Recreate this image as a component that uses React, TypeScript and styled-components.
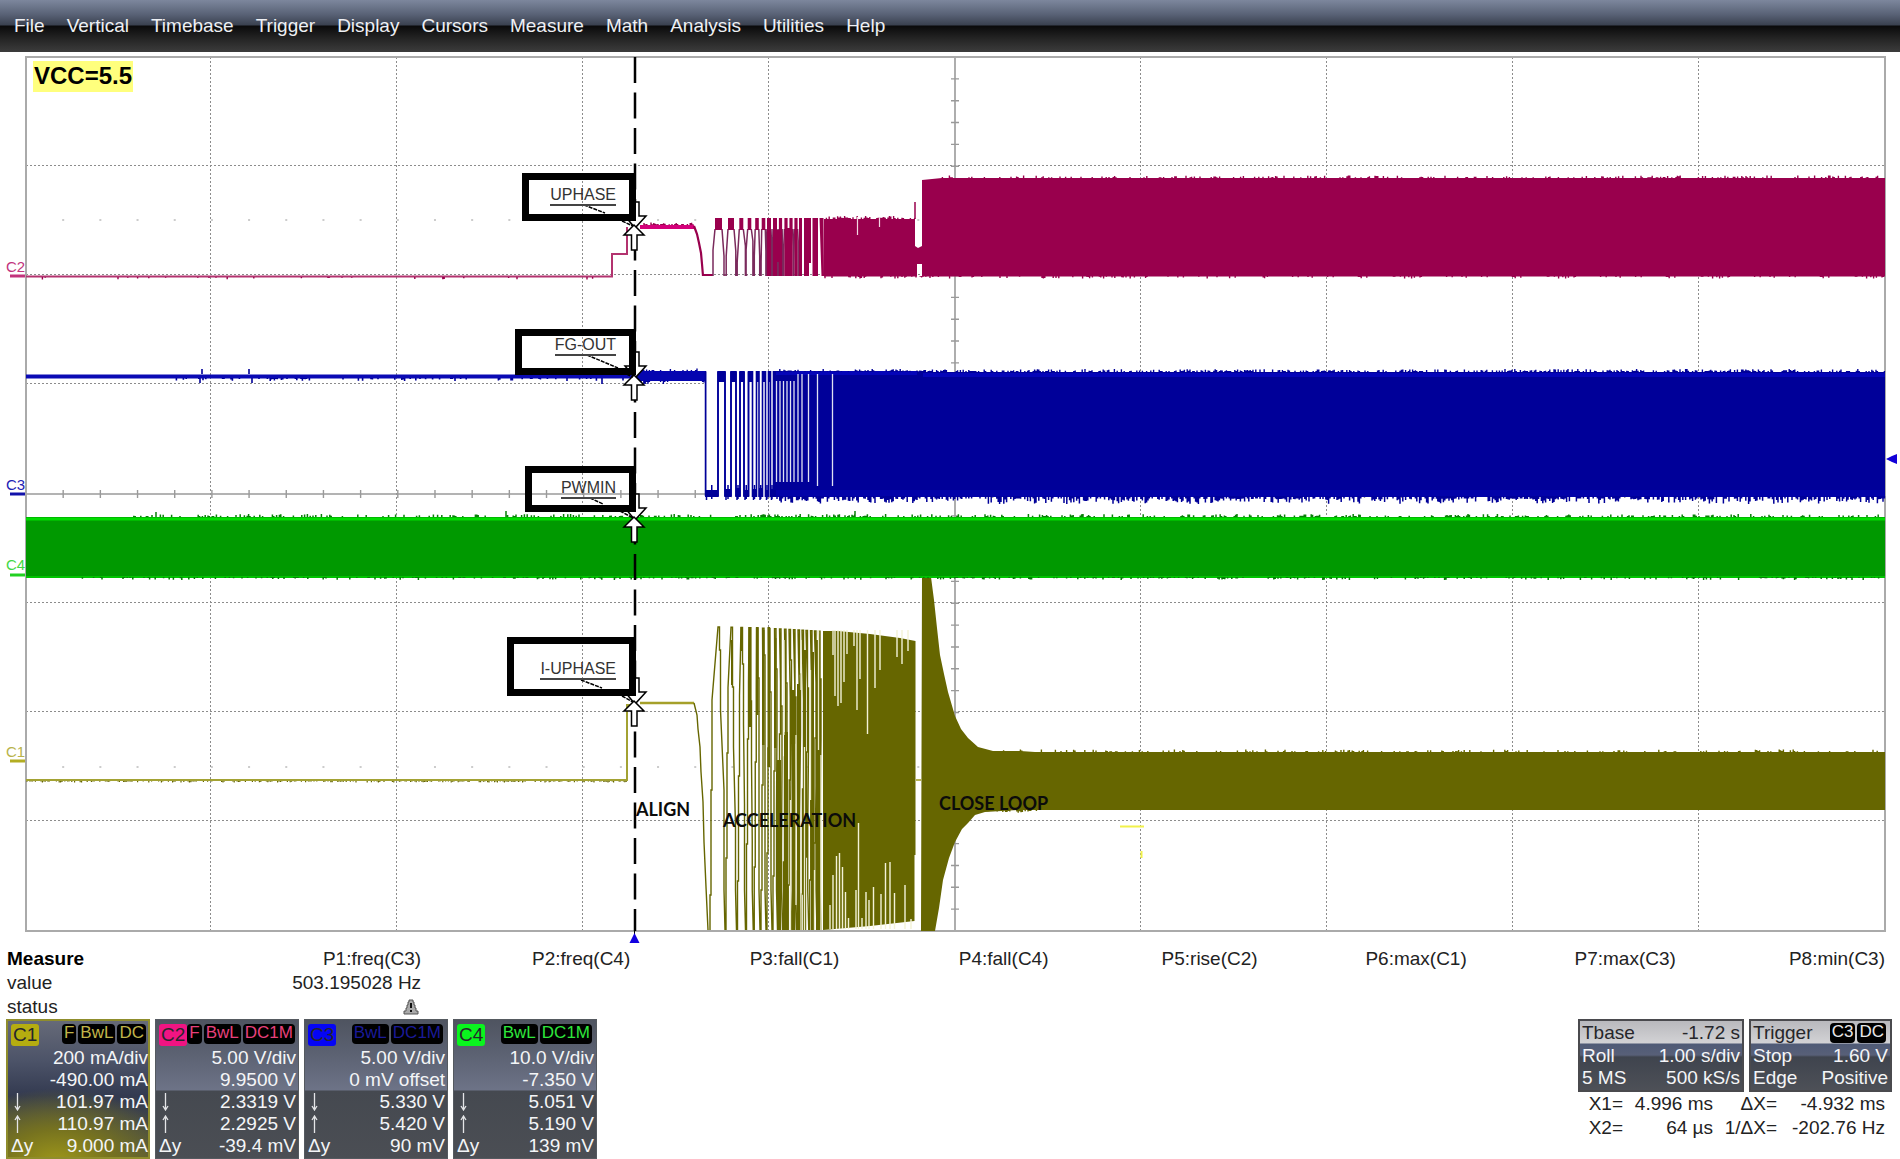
import React from "react";
import styled, { createGlobalStyle, css } from "styled-components";

const GlobalStyle = createGlobalStyle`
  *, *::before, *::after { box-sizing: border-box; }
  body {
    margin: 0;
    background: #fff;
    color: #222;
    font-family: "Liberation Sans", Arial, sans-serif;
    font-size: 19px;
    line-height: 22px;
  }
`;

const Screen = styled.main`
  display: flex;
  flex-direction: column;
  width: 100%;
`;

/* ---------- menu ---------- */

const MenuBar = styled.nav`
  display: flex;
  align-items: center;
  gap: 22px;
  height: 52px;
  padding: 0 14px;
  background: linear-gradient(#7d879d 0, #5a6377 14px, #3a4150 25px, #0a0a0b 26px, #232323 38px, #3c3c3c 52px);
`;

const MenuItem = styled.button`
  padding: 0;
  border: 0;
  background: none;
  color: #eef0f4;
  font: inherit;
  cursor: pointer;
`;

/* ---------- waveform area ---------- */

const VIEW = { w: 1900, top: 52, h: 893 };
const px = (n: number) => `${(n / VIEW.w) * 100}%`;
const py = (n: number) => `${((n - VIEW.top) / VIEW.h) * 100}%`;

const Canvas = styled.section`
  position: relative;
  width: 100%;
`;

const Plot = styled.svg`
  display: block;
  width: 100%;
  height: auto;
`;

const Pinned = styled.span<{ $x: number; $y: number }>`
  position: absolute;
  left: ${(p) => px(p.$x)};
  top: ${(p) => py(p.$y)};
  white-space: nowrap;
`;

const Title = styled(Pinned)`
  padding: 0 1px 2px;
  background: #ffff7d;
  color: #000;
  font-size: 24px;
  font-weight: bold;
  line-height: 29px;
`;

const ChannelTag = styled(Pinned)<{ $color: string }>`
  color: ${(p) => p.$color};
  font-size: 15px;
  line-height: 16px;
`;

const Phase = styled(Pinned)`
  color: #0b0b0b;
  font-family: Lato, "Open Sans", sans-serif;
  font-size: 18px;
  font-weight: bold;
  line-height: 22px;
`;

const Callout = styled(Pinned)<{ $w: number; $h: number; $pad: number }>`
  display: flex;
  justify-content: flex-end;
  align-items: flex-start;
  width: ${(p) => px(p.$w)};
  height: ${(p) => (p.$h / VIEW.h) * 100}%;
  padding: ${(p) => p.$pad}px 13px 0 0;
  border: 7px solid #000;
`;

const CalloutText = styled.span`
  border-bottom: 2px solid #444;
  color: #333;
  font-size: 16px;
  line-height: 18px;
`;

const GRID = { l: 26, r: 1885, t: 57, b: 931 };
const COL = (GRID.r - GRID.l) / 10;
const ROW = (GRID.b - GRID.t) / 8;
const MID_X = 955;
const MID_Y = 494;

/* repeatable noise for the ragged trace edges */
const noise = (seed: number) => {
  let s = seed;
  return () => {
    s = (s * 1103515245 + 12345) & 0x7fffffff;
    return s / 0x7fffffff;
  };
};

const fringe = (x1: number, x2: number, y: number, max: number, density: number, seed: number) => {
  const rnd = noise(seed);
  let d = "";
  for (let x = x1 + 1; x < x2; x += 1.4) {
    const a = rnd();
    const b = rnd();
    if (a < density) d += `M${x.toFixed(1)} ${y}v${(max * (0.3 + 0.7 * b * b)).toFixed(1)}`;
  }
  return d;
};

const Graticule = () => {
  const dotted = { stroke: "#8c8c8c", strokeWidth: 1, strokeDasharray: "2 2", shapeRendering: "crispEdges" as const };
  let ticks = "";
  let dots = "";
  for (let i = 1; i < 50; i++) {
    const x = GRID.l + (i * COL) / 5;
    ticks += `M${x} ${MID_Y - 4}v8`;
    dots += `M${x} 219v2M${x} 766v2`;
  }
  for (let i = 1; i < 40; i++) ticks += `M${MID_X - 4} ${GRID.t + (i * ROW) / 5}h8`;
  return (
    <g fill="none">
      {[1, 2, 3, 4, 6, 7, 8, 9].map((i) => (
        <path key={`c${i}`} d={`M${Math.floor(GRID.l + i * COL) - 1}.5 ${GRID.t}V${GRID.b}`} {...dotted} />
      ))}
      {[1, 2, 3, 5, 6, 7].map((i) => (
        <path key={`r${i}`} d={`M${GRID.l} ${Math.floor(GRID.t + i * ROW) - 1}.5H${GRID.r}`} {...dotted} />
      ))}
      <path d={ticks} stroke="#999" strokeWidth="1.4" />
      <path d={dots} stroke="#ccc" strokeWidth="2" />
      <path d={`M${GRID.l} ${MID_Y}H${GRID.r}M${MID_X} ${GRID.t}V${GRID.b}`} stroke="#9a9a9a" strokeWidth="1.6" />
      <path d={`M${GRID.l} ${GRID.t}H${GRID.r}V${GRID.b}H${GRID.l}z`} stroke="#aaa" strokeWidth="2" />
    </g>
  );
};

const TraceC2 = () => {
  const c = "#99004d";
  const peaks: [number, number][] = [
    [718.5, 3.5], [731, 3], [741.3, 2], [749.5, 1.8], [757, 1.8], [763.5, 1.8], [769, 2], [775, 2],
    [780.5, 1.6], [786, 1.6], [791, 1.6], [796, 1.6],
  ];
  let caps = "";
  let edges = "";
  peaks.forEach(([x, w], i) => {
    const foot = Math.max(w + 0.6, 5.5 - i * 0.7);
    const cap = i > 5 ? 58 : 12;
    caps += `M${x - w} 218h${2 * w}v${cap}h${-2 * w}z`;
    edges += `M${x - foot} 276V${250 + (i % 3) * 6}L${x - w} 229M${x + foot} 276V${256 - (i % 4) * 5}L${x + w} 229`;
    if (i < 6) edges += `M${x + foot} 275h2`;
  });
  return (
    <g fill="none" stroke={c}>
      <path d="M26 276.5H612V254H627V227" stroke="#b3336f" strokeWidth="2" />
      <path d={fringe(26, 612, 277, 2.5, 0.06, 5)} strokeWidth="1.4" />
      <path d="M640 227H694" stroke="#d4007a" strokeWidth="4" />
      <path d={fringe(643, 694, 225, -2.5, 0.6, 8)} strokeWidth="1.4" />
      <path d="M694 226l3 8 2 9 2 10 1 11 1 12M703 275H713" strokeWidth="2.2" />
      <path d={edges} stroke="#7a2a5c" strokeWidth="1.5" />
      <path d={caps} fill={c} stroke="none" />
      <path d="M776 230h6v32h-6zM786 228h5v48h-5zM799 218h3v58h-3zM804 218h7v45h-2v13h-5zM812.5 218h5.5v58h-5.5zM819.5 218h4l.5 58h-2.5z" fill={c} stroke="none" />
      <path d="M824 219H915V246l3 2 4-2V180l20-2H1885V276.5H922V264h-5V276.5H824z" fill={c} stroke="none" />
      <path d="M915 219V202" strokeWidth="1.5" />
      <path d={fringe(824, 915, 219, -3, 0.6, 21)} strokeWidth="1.4" />
      <path d={fringe(940, 1885, 178, -2.5, 0.25, 31)} strokeWidth="1.4" />
      <path d={fringe(824, 1885, 276, 2.5, 0.25, 37)} strokeWidth="1.4" />
      <path d="M857.5 217v18M879.5 217v10" stroke="#f3d5e2" strokeWidth="1.2" />
    </g>
  );
};

const TraceC3 = () => {
  const c = "#000099";
  const lows: [number, number][] = [
    [705.5, 718], [725, 731], [736, 740], [744, 748.5], [752.5, 756.5], [759, 762.5], [765.5, 768.5], [770.5, 773.5],
  ];
  const slits = [776.5, 780, 783.5, 787, 790.5, 794, 798, 802, 808.5, 817.5, 832.5];
  return (
    <g fill="none" stroke={c}>
      <path d="M26 376.5H636" stroke="#0a0ab4" strokeWidth="4" />
      <path d={fringe(160, 636, 378, 3, 0.2, 3) + "M202 374v-5M200 378v5M249 374v-5M252 378v5M602 378v6"} strokeWidth="1.6" />
      <path d="M636 371H706V381H636z" fill="#0505b0" stroke="none" />
      <path d={fringe(640, 706, 371, -3, 0.4, 41) + fringe(640, 706, 381, 3, 0.3, 43)} strokeWidth="1.4" />
      <path d="M705 371H917l6 1H1885V497H705z" fill={c} stroke="none" />
      <path d="M776 371H917v4H776zM923 373H1885v4H923z" fill="#0505b8" stroke="none" />
      <path d="M776 490H1885v7H776z" fill="#0303b4" stroke="none" opacity=".6" />
      {lows.map(([a, b], i) => (
        <g key={a} stroke="none">
          <path d={`M${a + 0.8} 368H${b - 0.8}V${490 - (i % 3)}H${a + 0.8}z`} fill="#fff" />
          {i < 7 && <path d={`M${b + 0.8} 382H${lows[i + 1][0] - 0.8}V500H${b + 0.8}z`} fill="#fff" />}
        </g>
      ))}
      <path d={lows.slice(0, 4).map(([a, b]) => `M${a} 372V496M${b} 372V496`).join("")} strokeWidth="1.5" />
      <path d={slits.map((x, i) => `M${x} ${i > 5 ? 374 : 381}V${i > 8 ? 486 : 482}`).join("")} stroke="#dfe1f2" strokeWidth="1.3" />
      <path d={lows.map(([a, b]) => `M${a + 1} 490V500M${(a + b) / 2} 485V499`).join("")} strokeWidth="1.5" />
      <path d={fringe(776, 1885, 372, -3, 0.5, 51)} strokeWidth="1.4" />
      <path d={fringe(776, 1885, 496, 8, 0.62, 57)} strokeWidth="1.5" />
    </g>
  );
};

const TraceC4 = () => (
  <g fill="none" stroke="#087f08">
    <path d="M26 517H1885V577H26z" fill="#009900" stroke="none" />
    <path d="M26 519H1885" stroke="#00dc00" strokeWidth="3" />
    <path d="M26 577H1885" stroke="#00c400" strokeWidth="2" />
    <path d={fringe(130, 1885, 517, -3, 0.3, 61) + "M156 517v-5M506 517v-6M855 517v-6"} strokeWidth="1.5" />
    <path d={fringe(80, 1885, 577, 3, 0.3, 67)} strokeWidth="1.5" />
  </g>
);

const TraceC1 = () => {
  const c = "#666600";
  const peaks = [718.5, 731.5, 741.5, 749.5, 757, 763, 769, 775, 780, 785, 789.5, 794, 798.5, 802.5, 806.5, 811, 815, 819];
  let d = "M694 703l3 12 1 14 2 18 1 25 2 30 1 40 2 45 2 43";
  peaks.forEach((x, i) => {
    const prev = i ? (peaks[i - 1] + x) / 2 + 1 : 710;
    const next = i < peaks.length - 1 ? (x + peaks[i + 1]) / 2 : x + 2;
    const top = 627 + i * 0.25;
    const j = (i * 37) % 60;
    d += `M${prev} 930V${895 - j}h1V${790 - j}h1V${700 - j / 3}L${x - 0.5} ${top}h1.5V${650 + j}h1V${710 + j}L${next - 1} ${790 + j}V890L${next} 930`;
  });
  const topSlits = [[833, 655], [835, 696], [838, 706], [841, 703], [844, 682], [847, 654], [854, 646], [857, 710], [860, 679], [867.5, 734], [875, 688], [880, 670], [897, 657], [902, 664], [908, 651]];
  const bottomSlits = [[830, 905], [833, 875], [836.5, 856], [839.5, 853], [842.5, 867], [845.5, 892], [848.5, 918], [856, 890], [858.5, 823], [862, 918], [866, 892], [869, 900], [873.5, 887], [881, 894], [885.5, 863], [890, 862], [894.5, 893], [905, 885], [911, 919]];
  return (
    <g fill="none" stroke={c}>
      <path d="M26 780H627V705H632V720" stroke="#a3a233" strokeWidth="2" />
      <path d={fringe(26, 627, 781, 1.5, 0.5, 71)} strokeWidth="1.2" />
      <path d="M640 703H694" stroke="#a5a02a" strokeWidth="2.5" />
      <path d={d} strokeWidth="1.4" />
      <path d="M740.5 627h2v24h-2zM748.5 627h3v100h-3zM756 627h2.5v88h-2.5zM762 630h2.5v115h-2.5zM767.500 627h2.5v140h-2.5zM774 638h2.5v110h-2.5zM731 640h2v45h-2z" fill={c} stroke="none" />
      <path d="M784 732h4v198h-4zM792 690h3v240h-3zM797 684h3v246h-3zM803 650h3v280h-3zM811 652h3v278h-3zM816 640h4v290h-4zM777 760h4v170h-4z" fill={c} stroke="none" />
      <path d="M784 640V735M790.5 800V930M796 735V905M801 640V690M801 850V930M804.5 747V930M810.500 670V800M814.500 870V930M818.500 630V750M821 755V930" stroke="#ecebcb" strokeWidth="1.3" />
      <path d="M823 631H838L870 634 900 638 915.5 641V855h-1V921L870 926 823 930z" fill={c} stroke="none" />
      <path d={topSlits.map(([x, y]) => `M${x} 630V${y}`).join("") + bottomSlits.map(([x, y]) => `M${x} ${y}V929`).join("")} stroke="#f3f2d6" strokeWidth="1.4" />
      <path d="M916 780H921" stroke="#a5a02a" strokeWidth="1.6" />
      <path
        d="M922 577H931L934 600 937 628 940 655 944 674 948 692 955 716 961 729 968 738 978 747 993 751 1020 751 1035 752H1885V810H1020L985 812 975 815 968 823 962 829 955 842 949 858 943 880 939 908 935 931H921z"
        fill={c}
        stroke="none"
      />
      <path d={fringe(990, 1885, 752, -2.5, 0.22, 81) + fringe(985, 1040, 810, 3, 0.5, 83)} strokeWidth="1.4" />
    </g>
  );
};

const CursorMark = ({ y }: { y: number }) => (
  <g stroke="#000" strokeWidth="1.5">
    <path d={`M632 ${y - 24}H639V${y - 10}H646L635 ${y + 2} 625 ${y - 10}H632z`} fill="#fff" />
    <path d={`M634 ${y - 1}L644 ${y + 9}H637V${y + 24}H631.5V${y + 9}H624z`} fill="#fff" />
  </g>
);

const callouts = [
  { text: "UPHASE", x: 522, y: 173, w: 114, h: 48, pad: 6, mark: 226, leader: "M584 205L605 213M622 221L633 226" },
  { text: "FG-OUT", x: 515, y: 329, w: 121, h: 46, pad: 0, mark: 376, leader: "M587 355L618 368M622 372L633 377" },
  { text: "PWMIN", x: 525, y: 466, w: 111, h: 46, pad: 6, mark: 518, leader: "M590 498L603 504M620 511L633 518" },
  { text: "I-UPHASE", x: 507, y: 637, w: 129, h: 59, pad: 16, mark: 702, leader: "M581 680L602 688M622 696L633 702" },
];

const Waveforms = () => (
  <Canvas aria-label="Waveforms">
    <Plot viewBox={`0 ${VIEW.top} ${VIEW.w} ${VIEW.h}`} aria-hidden="true">
      <Graticule />
      <TraceC1 />
      <TraceC2 />
      <TraceC3 />
      <TraceC4 />
      <path d="M1120 826.5h24M1141.500 851v7" stroke="#f2f24a" strokeWidth="2" />
      <path d="M10 276H25" stroke="#c2337c" strokeWidth="3" />
      <path d="M10 494H25" stroke="#1111aa" strokeWidth="3" />
      <path d="M10 575H25" stroke="#22d022" strokeWidth="3" />
      <path d="M10 761H25" stroke="#b3ad22" strokeWidth="3" />
      <path d="M635 57V931" stroke="#000" strokeWidth="2.5" strokeDasharray="26 9.5" />
      <path d="M634.5 930V938" stroke="#000" />
      <path d="M634.5 933l5 10h-10z" fill="#1200e0" />
      <path d="M1886 459l6-3 5-2v10l-5-2z" fill="#1200d8" />
      {callouts.map((c) => (
        <g key={c.text}>
          <CursorMark y={c.mark} />
          <path d={c.leader} stroke="#000" strokeWidth="1.5" strokeDasharray="4 1" />
        </g>
      ))}
    </Plot>
    <Title $x={33} $y={61}>VCC=5.5</Title>
    <ChannelTag $x={6} $y={259} $color="#c2337c">C2</ChannelTag>
    <ChannelTag $x={6} $y={477} $color="#2222b4">C3</ChannelTag>
    <ChannelTag $x={6} $y={557} $color="#44d844">C4</ChannelTag>
    <ChannelTag $x={6} $y={744} $color="#b8b34a">C1</ChannelTag>
    {callouts.map((c) => (
      <Callout key={c.text} $x={c.x} $y={c.y} $w={c.w} $h={c.h} $pad={c.pad}>
        <CalloutText>{c.text}</CalloutText>
      </Callout>
    ))}
    <Phase $x={636} $y={798}>ALIGN</Phase>
    <Phase $x={723} $y={809}>ACCELERATION</Phase>
    <Phase $x={939} $y={792}>CLOSE LOOP</Phase>
  </Canvas>
);

/* ---------- measurements ---------- */

const MeasureWrap = styled.section`
  padding: 2px 15px 0 7px;
`;

const MeasureTable = styled.table`
  width: 100%;
  table-layout: fixed;
  border-collapse: collapse;
  line-height: 24px;

  th, td { height: 24px; padding: 0; font-weight: normal; text-align: right; white-space: nowrap; }
  th:first-child { width: 205px; text-align: left; }
  thead th:first-child { color: #000; font-weight: bold; }
`;

const WarningIcon = styled.svg`
  display: block;
  width: 16px;
  height: 16px;
  margin: 0 2px 0 auto;
`;

const params = ["P1:freq(C3)", "P2:freq(C4)", "P3:fall(C1)", "P4:fall(C4)", "P5:rise(C2)", "P6:max(C1)", "P7:max(C3)", "P8:min(C3)"];

const Measurements = () => (
  <MeasureWrap>
    <MeasureTable>
      <thead>
        <tr>
          <th scope="col">Measure</th>
          {params.map((p) => <th scope="col" key={p}>{p}</th>)}
        </tr>
      </thead>
      <tbody>
        <tr>
          <th scope="row">value</th>
          <td>503.195028 Hz</td>
          <td colSpan={7} />
        </tr>
        <tr>
          <th scope="row">status</th>
          <td>
            <WarningIcon viewBox="0 0 16 16" role="img" aria-label="warning">
              <path d="M6 1h4v2h1v3h1v3h1v3h2v3H1v-3h2V9h1V6h1V3h1z" fill="#aaa" stroke="#555" />
              <path d="M8 4v5M8 11v2" stroke="#111" strokeWidth="2" />
            </WarningIcon>
          </td>
          <td colSpan={7} />
        </tr>
      </tbody>
    </MeasureTable>
  </MeasureWrap>
);

/* ---------- descriptor boxes ---------- */

const Footer = styled.footer`
  display: flex;
  justify-content: space-between;
  align-items: flex-start;
  padding: 0 8px 0 6px;
`;

const Group = styled.div<{ $gap: number }>`
  display: flex;
  gap: ${(p) => p.$gap}px;
`;

const ChannelBox = styled.article<{ $active?: boolean }>`
  width: 144px;
  height: 140px;
  padding: 4px 2px 0 3px;
  border: 1px solid #555a60;
  color: #f4f5f7;
  background: linear-gradient(#4f5460 0, #5a6070 30px, #6d7387 70px, #454950 71px, #4b4e54 100%);
  ${(p) =>
    p.$active &&
    css`
      border: 2px solid #8f8d2c;
      padding: 3px 0 0 3px;
      background:
        radial-gradient(ellipse 120px 75px at 35% 105%, #a0991a 0, #77731f 45%, transparent 100%),
        linear-gradient(#666a78 0, #4c5368 40px, #333a50 75px, #55563f 100%);
    `}
`;

const BoxHead = styled.header`
  display: flex;
  justify-content: space-between;
  height: 23px;
`;

const Chip = styled.span<{ $color: string }>`
  height: 22px;
  padding: 0 2px;
  border-radius: 3px;
  background: ${(p) => p.$color};
  color: #26262c;
  line-height: 22px;
`;

const Badges = styled.span`
  display: flex;
  gap: 2px;
  padding-right: 2px;
`;

const Badge = styled.span<{ $color: string }>`
  height: 20px;
  padding: 0 2px;
  border-radius: 4px;
  background: #000;
  color: ${(p) => p.$color};
  font-size: 17px;
  line-height: 18px;
`;

const Line = styled.div`
  display: flex;
  justify-content: space-between;
  align-items: center;
  height: 22px;
  white-space: nowrap;
`;

const ArrowIcon = styled.svg`
  width: 9px;
  height: 18px;
  margin-left: 2px;
`;

const Arrow = ({ up }: { up?: boolean }) => (
  <ArrowIcon viewBox="0 0 9 18" aria-hidden="true">
    <path d={up ? "M4.5 18V1M2 5l2.5-4L7 5" : "M4.5 0V17M2 13l2.5 4L7 13"} stroke="#e4e5e7" strokeWidth="1.3" fill="none" />
  </ArrowIcon>
);

const channels = [
  { id: "C1", chip: "#b5ad10", ink: "#c0b54a", badges: ["F", "BwL", "DC"], rows: ["200 mA/div", "-490.00 mA", "101.97 mA", "110.97 mA", "9.000 mA"] },
  { id: "C2", chip: "#f01482", ink: "#e8407c", badges: ["F", "BwL", "DC1M"], rows: ["5.00 V/div", "9.9500 V", "2.3319 V", "2.2925 V", "-39.4 mV"] },
  { id: "C3", chip: "#0505f5", ink: "#1a1a98", badges: ["BwL", "DC1M"], rows: ["5.00 V/div", "0 mV offset", "5.330 V", "5.420 V", "90 mV"] },
  { id: "C4", chip: "#0af51e", ink: "#2ee63c", badges: ["BwL", "DC1M"], rows: ["10.0 V/div", "-7.350 V", "5.051 V", "5.190 V", "139 mV"] },
];

const leads = [<span />, <span />, <Arrow />, <Arrow up />, <span>Δy</span>];

const InfoBox = styled.article<{ $w: number }>`
  width: ${(p) => p.$w}px;
  height: 73px;
  padding: 0 2px;
  border: 2px solid #4a4a4e;
  color: #f4f5f7;
  background: linear-gradient(#b9b9bd 0, #d2d2d5 22px, #4f5a76 23px, #586078 34px, #3f444e 36px, #4d5057 100%);
`;

const InfoHead = styled(Line)`
  height: 24px;
  color: #26262a;
`;

const Side = styled.aside`
  display: flex;
  flex-direction: column;
`;

const Readout = styled.dl`
  display: grid;
  grid-template-columns: 36px 90px 64px 1fr;
  row-gap: 2px;
  margin: 0;
  padding: 1px 7px 0 9px;
  text-align: right;
  white-space: nowrap;

  dt, dd { margin: 0; }
`;

const menu = ["File", "Vertical", "Timebase", "Trigger", "Display", "Cursors", "Measure", "Math", "Analysis", "Utilities", "Help"];

export default function App() {
  return (
    <Screen>
      <GlobalStyle />
      <MenuBar>
        {menu.map((m) => <MenuItem key={m} type="button">{m}</MenuItem>)}
      </MenuBar>
      <Waveforms />
      <Measurements />
      <Footer>
        <Group $gap={5}>
          {channels.map((ch, n) => (
            <ChannelBox key={ch.id} $active={n === 0}>
              <BoxHead>
                <Chip $color={ch.chip}>{ch.id}</Chip>
                <Badges>
                  {ch.badges.map((b) => <Badge key={b} $color={ch.ink}>{b}</Badge>)}
                </Badges>
              </BoxHead>
              {ch.rows.map((r, i) => (
                <Line key={i}>
                  {leads[i]}
                  <span>{r}</span>
                </Line>
              ))}
            </ChannelBox>
          ))}
        </Group>
        <Side>
          <Group $gap={5}>
            <InfoBox $w={166}>
              <InfoHead><span>Tbase</span><span>-1.72 s</span></InfoHead>
              <Line><span>Roll</span><span>1.00 s/div</span></Line>
              <Line><span>5 MS</span><span>500 kS/s</span></Line>
            </InfoBox>
            <InfoBox $w={143}>
              <InfoHead>
                <span>Trigger</span>
                <Badges>
                  <Badge $color="#e8e8e8">C3</Badge>
                  <Badge $color="#e8e8e8">DC</Badge>
                </Badges>
              </InfoHead>
              <Line><span>Stop</span><span>1.60 V</span></Line>
              <Line><span>Edge</span><span>Positive</span></Line>
            </InfoBox>
          </Group>
          <Readout>
            <dt>X1=</dt><dd>4.996 ms</dd><dt>ΔX=</dt><dd>-4.932 ms</dd>
            <dt>X2=</dt><dd>64 µs</dd><dt>1/ΔX=</dt><dd>-202.76 Hz</dd>
          </Readout>
        </Side>
      </Footer>
    </Screen>
  );
}
